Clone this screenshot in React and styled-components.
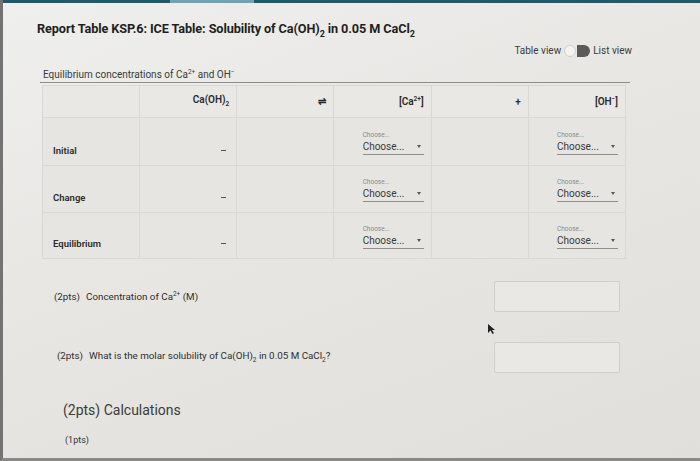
import styled, { createGlobalStyle } from "styled-components";

const Global = createGlobalStyle`
  html, body { margin: 0; padding: 0; }
  body {
    font-family: Roboto, "Liberation Sans", sans-serif;
    background: #e2e1de;
  }
`;

const Frame = styled.div`
  position: relative;
  box-sizing: border-box;
  width: 700px;
  height: 461px;
  overflow: hidden;
  border-left: 3px solid #737373;
  border-bottom: 3px solid #8a8986;
  background: linear-gradient(160deg, #efefed 0%, #e8e7e4 40%, #e0dfdc 100%);
`;

const TopBar = styled.div`
  height: 3px;
  background: linear-gradient(90deg, #1c5a6d 0%, #1c5a6d 24%, #6fa3b3 24%, #6fa3b3 36%, #1c5a6d 36%);
`;

const Content = styled.div`
  padding: 18px 0 0 34px;
  width: 583px;
`;

const Title = styled.h1`
  margin: 0;
  font-size: 12.7px;
  font-weight: 700;
  color: #1f1f1f;
  letter-spacing: -0.1px;
  sub { font-size: 9px; }
`;

const ViewRow = styled.div`
  display: flex;
  justify-content: flex-end;
  align-items: center;
  gap: 2px;
  margin: 6px -12px 0 0;
  font-size: 10px;
  color: #3c3c3c;
`;

const Switch = styled.span`
  position: relative;
  display: inline-block;
  width: 26px;
  height: 12px;
  margin: 0 1px;
  border-radius: 6px;
  background: linear-gradient(90deg, transparent 0 50%, #5a5a5a 50%);
`;

const Knob = styled.span`
  position: absolute;
  left: 0;
  top: 0;
  width: 12px;
  height: 12px;
  border-radius: 50%;
  background: #f3f3f2;
  border: 1px solid #cfcfcc;
  box-sizing: border-box;
`;

const Caption = styled.div`
  margin: 11px -10px 0 3px;
  padding: 0 0 2px 3px;
  font-size: 10px;
  color: #3a3a3a;
  border-bottom: 1px solid #8d8c89;
  sup { font-size: 6.5px; }
`;

const Grid = styled.table`
  margin: 2px 0 0 5px;
  border-collapse: collapse;
  table-layout: fixed;
  width: 584px;
`;

const Cell = styled.td`
  box-sizing: border-box;
  border: 1px solid #d9d8d5;
  background: ${(p) => (p.$head ? "#e9e8e5" : "#e6e5e2")};
  padding: ${(p) => (p.$label ? "0 0 9px 10px" : "0 7px")};
  height: ${(p) => p.$h}px;
  text-align: ${(p) => (p.$label ? "left" : "right")};
  vertical-align: ${(p) => (p.$label || p.$dash ? "bottom" : "middle")};
  font-size: ${(p) => (p.$head ? "10px" : "9.5px")};
  font-weight: ${(p) => (p.$label || p.$head ? 600 : 400)};
  color: #2b2b2b;
  sup, sub { font-size: 6.5px; }
`;

const Dash = styled.span`
  display: inline-block;
  width: 5px;
  height: 1px;
  background: #555;
  margin: 0 3px 12px 0;
`;

const SelectBox = styled.div`
  display: inline-flex;
  flex-direction: column;
  align-items: flex-start;
  width: 61px;
  text-align: left;
`;

const SmallLabel = styled.span`
  font-size: 6.5px;
  color: #8a8a88;
  margin-bottom: 2px;
`;

const SelectValue = styled.span`
  display: flex;
  justify-content: space-between;
  align-items: center;
  width: 100%;
  box-sizing: border-box;
  padding: 0 3px 2px 0;
  border-bottom: 1px solid #8f8f8c;
  font-size: 10px;
  color: #3a3a3a;
  &::after {
    content: "";
    border-left: 2.5px solid transparent;
    border-right: 2.5px solid transparent;
    border-top: 3px solid #555;
  }
`;

const QuestionRow = styled.div`
  display: flex;
  justify-content: space-between;
  align-items: center;
  margin-top: ${(p) => p.$mt}px;
  padding-left: ${(p) => p.$pl}px;
  font-size: 9.8px;
  color: #2f2f2f;
  sup, sub { font-size: 6.5px; }
`;

const Pts = styled.span`
  margin-right: 6px;
`;

const AnswerBox = styled.div`
  width: 126px;
  height: 31px;
  box-sizing: border-box;
  border: 1px solid #cfcecb;
  border-radius: 2px;
  background: #e9e8e5;
`;

const Calc = styled.div`
  margin-top: 29px;
  padding-left: 26px;
  font-size: 14px;
  color: #3b3b3b;
`;

const Small = styled.div`
  margin-top: 17px;
  padding-left: 28px;
  font-size: 9px;
  color: #333;
`;

const Cursor = styled.svg`
  position: absolute;
  left: 484px;
  top: 323px;
`;

const Choose = () => (
  <SelectBox>
    <SmallLabel>Choose...</SmallLabel>
    <SelectValue>Choose...</SelectValue>
  </SelectBox>
);

const rows = [
  { name: "Initial", h: 48 },
  { name: "Change", h: 47 },
  { name: "Equilibrium", h: 46 },
];

export default function App() {
  return (
    <Frame>
      <Global />
      <TopBar />
      <Content>
        <Title>
          Report Table KSP.6: ICE Table: Solubility of Ca(OH)<sub>2</sub> in 0.05 M CaCl<sub>2</sub>
        </Title>
        <ViewRow>
          Table view
          <Switch>
            <Knob />
          </Switch>
          List view
        </ViewRow>
        <Caption>
          Equilibrium concentrations of Ca<sup>2+</sup> and OH<sup>−</sup>
        </Caption>
        <Grid>
          <tbody>
            <tr>
              <Cell $head $h={32} />
              <Cell $head $h={32}>
                Ca(OH)<sub>2</sub>
              </Cell>
              <Cell $head $h={32}>⇌</Cell>
              <Cell $head $h={32}>
                [Ca<sup>2+</sup>]
              </Cell>
              <Cell $head $h={32}>+</Cell>
              <Cell $head $h={32}>
                [OH<sup>−</sup>]
              </Cell>
            </tr>
            {rows.map((r) => (
              <tr key={r.name}>
                <Cell $label $h={r.h}>{r.name}</Cell>
                <Cell $dash $h={r.h}>
                  <Dash />
                </Cell>
                <Cell $h={r.h} />
                <Cell $h={r.h}>
                  <Choose />
                </Cell>
                <Cell $h={r.h} />
                <Cell $h={r.h}>
                  <Choose />
                </Cell>
              </tr>
            ))}
          </tbody>
        </Grid>
        <QuestionRow $mt={22} $pl={17}>
          <span>
            <Pts>(2pts)</Pts>Concentration of Ca<sup>2+</sup> (M)
          </span>
          <AnswerBox />
        </QuestionRow>
        <QuestionRow $mt={30} $pl={20}>
          <span>
            <Pts>(2pts)</Pts>What is the molar solubility of Ca(OH)<sub>2</sub> in 0.05 M CaCl<sub>2</sub>?
          </span>
          <AnswerBox />
        </QuestionRow>
        <Calc>(2pts) Calculations</Calc>
        <Small>(1pts)</Small>
      </Content>
      <Cursor width="9" height="12" viewBox="0 0 9 12">
        <path d="M1 1 L1 10 L3.5 7.5 L5.5 11 L7 10.3 L5 7 L8 7 Z" fill="#222" />
      </Cursor>
    </Frame>
  );
}
